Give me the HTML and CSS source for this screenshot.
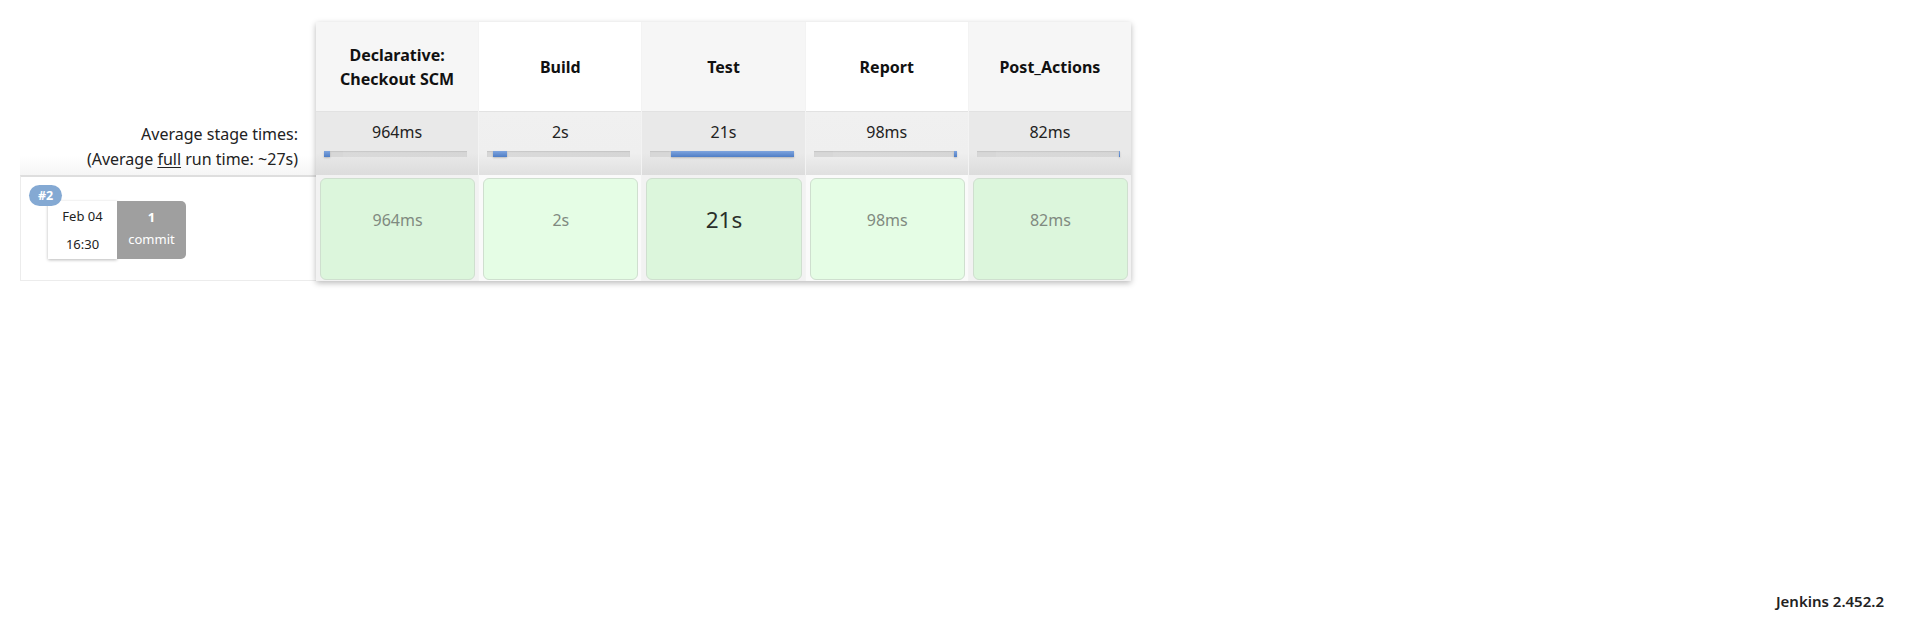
FILE: index.html
```html
<!DOCTYPE html>
<html>
<head>
<meta charset="utf-8">
<link rel="stylesheet" href="styles.css">
</head>
<body>
<div class="page">
  <div class="stage-view">
    <div class="left">
      <div class="left-head"></div>
      <div class="left-avg">
        <div>Average stage times:</div>
        <div>(Average <u>full</u> run time: ~27s)</div>
      </div>
      <div class="build-row">
        <div class="build-card">
          <span class="badge">#2</span>
          <div class="date">
            <div>Feb 04</div>
            <div>16:30</div>
          </div>
          <div class="commit">
            <div class="cnum">1</div>
            <div>commit</div>
          </div>
        </div>
      </div>
    </div>
    <div class="table">
      <div class="col odd">
        <div class="head">Declarative:<br>Checkout SCM</div>
        <div class="avg"><div class="t">964ms</div><div class="track"><div class="fill" style="left:0%;width:4%"></div></div></div>
        <div class="body"><div class="cell"><span class="v">964ms</span></div></div>
      </div>
      <div class="col even">
        <div class="head">Build</div>
        <div class="avg"><div class="t">2s</div><div class="track"><div class="fill" style="left:4%;width:10%"></div></div></div>
        <div class="body"><div class="cell"><span class="v">2s</span></div></div>
      </div>
      <div class="col odd">
        <div class="head">Test</div>
        <div class="avg"><div class="t">21s</div><div class="track"><div class="fill" style="left:14.5%;width:85.5%"></div></div></div>
        <div class="body"><div class="cell"><span class="v big">21s</span></div></div>
      </div>
      <div class="col even">
        <div class="head">Report</div>
        <div class="avg"><div class="t">98ms</div><div class="track"><div class="fill" style="left:98%;width:2%"></div></div></div>
        <div class="body"><div class="cell"><span class="v">98ms</span></div></div>
      </div>
      <div class="col odd">
        <div class="head">Post_Actions</div>
        <div class="avg"><div class="t">82ms</div><div class="track"><div class="fill" style="left:99%;width:1.2%"></div></div></div>
        <div class="body"><div class="cell"><span class="v">82ms</span></div></div>
      </div>
    </div>
  </div>
  <div class="footer">Jenkins 2.452.2</div>
</div>
</body>
</html>
```
FILE: styles.css
```css
html, body {
  margin: 0;
  padding: 0;
  background: #fff;
}
body {
  font-family: "Noto Sans", "Open Sans", sans-serif;
  color: #1a1a1a;
  width: 1918px;
  height: 628px;
  overflow: hidden;
}
.page {
  position: relative;
  height: 628px;
  padding: 22px 0 0 20px;
  box-sizing: border-box;
}
.stage-view {
  display: flex;
  align-items: flex-start;
}
.left {
  width: 296px;
  display: flex;
  flex-direction: column;
}
.left-head {
  height: 89px;
}
.left-avg {
  height: 64px;
  text-align: right;
  padding-right: 18px;
  font-size: 16px;
  line-height: 25px;
  color: #222;
  display: flex;
  flex-direction: column;
  justify-content: flex-end;
  padding-bottom: 3px;
  box-sizing: border-box;
  background: linear-gradient(#fff 70%, #f5f5f5);
}
.left-avg u {
  text-underline-offset: 2px;
}
.build-row {
  height: 106px;
  border-top: 2px solid #dedede;
  border-left: 1px solid #ececec;
  border-bottom: 1px solid #ececec;
  box-sizing: border-box;
  padding: 9px 0 0 8px;
}
.build-card {
  position: relative;
  display: flex;
  margin-top: 15px;
  margin-left: 19px;
  width: 138px;
}
.badge {
  position: absolute;
  left: -19px;
  top: -16px;
  background: #84a9d3;
  color: #fff;
  font-size: 12.5px;
  font-weight: 700;
  line-height: 21px;
  padding: 0 9px;
  border-radius: 11px;
  z-index: 2;
}
.date {
  width: 69px;
  height: 58px;
  background: #fff;
  box-shadow: 0 1px 3px rgba(0,0,0,.28);
  font-size: 13px;
  color: #222;
  text-align: center;
  display: flex;
  flex-direction: column;
  justify-content: center;
  gap: 8px;
  line-height: 20px;
}
.commit {
  width: 69px;
  height: 58px;
  background: #9f9f9f;
  border-radius: 0 5px 5px 0;
  color: #fff;
  font-size: 13px;
  text-align: center;
  display: flex;
  flex-direction: column;
  justify-content: center;
  line-height: 20px;
  gap: 2px;
  padding-bottom: 4px;
  box-sizing: border-box;
}
.cnum {
  font-weight: 700;
}
.table {
  display: flex;
  width: 815px;
  box-shadow: 0 2px 6px rgba(0,0,0,.28);
  background: #f3f3f3;
  gap: 1px;
}
.col {
  flex: 1;
  display: flex;
  flex-direction: column;
}
.head {
  height: 89px;
  display: flex;
  align-items: center;
  justify-content: center;
  text-align: center;
  font-weight: 700;
  font-size: 16px;
  line-height: 24px;
  color: #111;
}
.odd .head { background: #f6f6f6; }
.even .head { background: #fff; }
.avg {
  height: 64px;
  box-sizing: border-box;
  padding: 10px 11px 0 8px;
  border-top: 1px solid #e2e2e2;
}
.odd .avg { background: linear-gradient(#e9e9e9 0%, #e9e9e9 65%, #dcdcdc 100%); }
.even .avg { background: linear-gradient(#f0f0f0 0%, #efefef 65%, #e0e0e0 100%); }
.t {
  text-align: center;
  font-size: 16px;
  line-height: 21px;
  color: #222;
  margin-left: 3px;
}
.track {
  position: relative;
  height: 6px;
  margin-top: 8px;
  background: linear-gradient(90deg, #d7d7d7 0, #d7d7d7 13%, #dadada 13%, #d6d6d6 100%);
  box-shadow: inset 0 1px 1px rgba(0,0,0,.08);
}
.fill {
  position: absolute;
  top: 0;
  bottom: 0;
  background: linear-gradient(#7ea4de, #4f7ec6);
  box-shadow: 0 1px 2px rgba(0,0,0,.2);
}
.body {
  height: 106px;
  padding: 3px 3px 1px 4px;
  box-sizing: border-box;
  background: #f0f0f0;
}
.odd .body { background: #f2f2f2; }
.even .body { background: #fafafa; }
.cell {
  height: 100%;
  box-sizing: border-box;
  border: 1px solid #cfdfcf;
  border-radius: 6px;
  display: flex;
  justify-content: center;
  padding-top: 30px;
}
.odd .cell { background: #dcf6dc; }
.even .cell { background: #e5fde5; }
.v {
  font-size: 16px;
  line-height: 22px;
  color: #808a80;
}
.v.big {
  font-size: 22.5px;
  line-height: 22px;
  color: #2a2f2a;
}
.footer {
  position: absolute;
  right: 34px;
  top: 591px;
  font-size: 15px;
  font-weight: 600;
  color: #222;
}
```
